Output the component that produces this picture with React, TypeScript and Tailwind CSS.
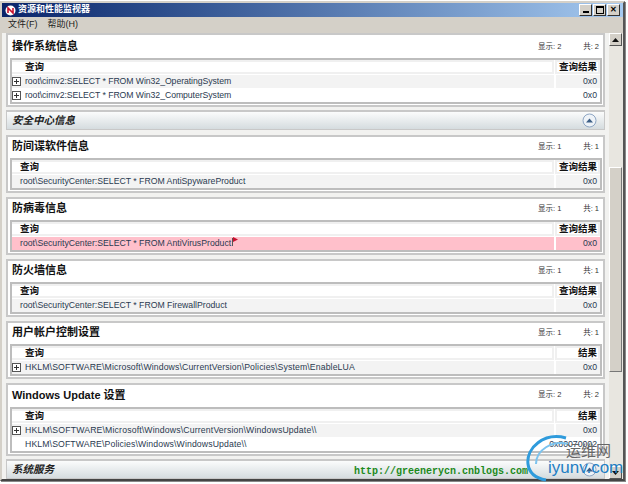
const FONT = '"Liberation Sans", "Noto Sans CJK SC", sans-serif';

interface Row {
  text: string;
  result: string;
  expand?: boolean;
  alert?: boolean;
  textClass?: string;
}

interface PanelProps {
  title: string;
  shown: number;
  total: number;
  rows: Row[];
  resultLabel?: string;
  indent?: boolean;
  titleClass?: string;
  gapClass?: string;
}

const Plus = () => (
  <svg width="9" height="9" viewBox="0 0 9 9" className="shrink-0">
    <rect x="0.5" y="0.5" width="8" height="8" fill="#fff" stroke="#555" />
    <path d="M2 4.5h5M4.5 2v5" stroke="#333" />
  </svg>
);

const Panel = ({ title, shown, total, rows, resultLabel = '查询结果', indent = false, titleClass = 'h-[21px] pb-[2px]', gapClass = 'mb-[4px]' }: PanelProps) => {
  return (
    <div className={`${gapClass} mr-[4px] shrink-0 border-2 border-[#c8c8c8] bg-white pb-[1px] pl-[2px] pr-[1px]`}>
      <div className={`flex items-center pl-[2px] ${titleClass}`}>
        <span className="text-[11px] font-bold text-[#111]">{title}</span>
        <div className="ml-auto mr-[3px] flex w-[61px] text-[7.5px] text-[#333]">
          <span>显示: {shown}</span>
          <span className="ml-auto">共: {total}</span>
        </div>
      </div>
      <div className="border-2 border-[#bdbdbd]">
        <div className="flex h-[14px] text-[9.5px] font-bold text-[#111]">
          <div className={`flex flex-1 items-center border-2 border-l-0 border-[#f0f0f0] ${indent ? 'pl-[13px]' : 'pl-[8px]'}`}>查询</div>
          <div className="ml-[1px] flex w-[45px] items-center justify-end border-2 border-[#f0f0f0] pr-[1px]">{resultLabel}</div>
        </div>
        <div className="mt-[1px] flex flex-col">
          {rows.map((row, i) => (
            <div
              key={row.text}
              className={`flex h-[13px] items-center text-[8.7px] text-[#2a3a50] ${row.alert ? 'bg-[#ffc0cb]' : i % 2 === 0 ? 'bg-[#f3f3f3]' : 'bg-white'} ${i > 0 ? 'mt-[1px]' : ''}`}
            >
              <div className={`flex flex-1 items-center overflow-hidden whitespace-nowrap ${indent ? '' : 'pl-[8px]'}`}>
                {indent && <span className="mr-[4px] flex w-[9px] shrink-0">{row.expand && <Plus />}</span>}
                <span className={row.textClass}>{row.text}</span>
                {row.alert && (
                  <svg width="7" height="9" viewBox="0 0 7 9" className="-mt-[4px] ml-[1px] shrink-0">
                    <path d="M0.5 1v8" stroke="#555" />
                    <path d="M1 0l5 2.5L1 5z" fill="#c8102e" />
                  </svg>
                )}
              </div>
              <div className="flex h-full w-[46px] items-center justify-end border-l-2 border-white pr-[3px]">{row.result}</div>
            </div>
          ))}
        </div>
      </div>
    </div>
  );
};

const SectionBar = ({ title }: { title: string }) => (
  <div className="mb-[5px] mr-[4px] flex h-[20px] shrink-0 items-center border border-t-2 border-[#c8c8c8] bg-gradient-to-b from-[#fbfcfc] to-[#d5dcdf] pl-[5px] pr-[7px]">
    <span className="text-[10.5px] font-bold italic text-[#222]">{title}</span>
    <svg width="15" height="15" viewBox="0 0 15 15" className="ml-auto">
      <circle cx="7.5" cy="7.5" r="6.5" fill="#eef3f8" stroke="#8ea6c4" />
      <path d="M4 9.5L7.5 5.5L11 9.5z" fill="#3d5f86" />
    </svg>
  </div>
);

const CapButton = ({ children }: { children: React.ReactNode }) => (
  <div className="flex h-[12px] w-[13px] items-center justify-center border border-t-white border-l-white border-r-[#333] border-b-[#333] bg-[#d4d0c8] text-[8px] font-bold text-black">
    {children}
  </div>
);

const ScrollArrow = ({ up }: { up?: boolean }) => (
  <div className="flex h-[13px] w-[13px] shrink-0 items-center justify-center border border-t-white border-l-white border-r-[#555] border-b-[#555] bg-[#d4d0c8]">
    <svg width="7" height="4" viewBox="0 0 7 4">
      <path d={up ? 'M0 4L3.5 0L7 4z' : 'M0 0L3.5 4L7 0z'} fill="#111" />
    </svg>
  </div>
);

const App = () => {
  return (
    <div className="relative h-[484px] w-[628px] overflow-hidden bg-white pt-[1px]" style={{ fontFamily: FONT }}>
      <div className="flex h-[480px] w-[625px] flex-col border-2 border-[#d4d0c8] border-r-[#555] border-b-[#444] shadow-[1px_1px_0_#888]">
        {/* title bar */}
        <div className="flex h-[14px] shrink-0 items-center bg-gradient-to-r from-[#0a246a] to-[#a6caf0] pl-[3px] pr-[3px]">
          <svg width="11" height="11" viewBox="0 0 11 11">
            <circle cx="5.5" cy="5.5" r="5" fill="#fff" />
            <path d="M3 8V3l5 5V3" stroke="#c8102e" strokeWidth="1.6" fill="none" />
          </svg>
          <span className="ml-[2px] text-[9px] font-bold text-white">资源和性能监视器</span>
          <div className="ml-auto flex gap-[1px]">
            <CapButton><span className="mt-[4px] block h-[2px] w-[6px] bg-black" /></CapButton>
            <CapButton><span className="block h-[8px] w-[8px] border border-t-2 border-black" /></CapButton>
            <CapButton>✕</CapButton>
          </div>
        </div>
        {/* menu */}
        <div className="flex h-[16px] shrink-0 items-center gap-[10px] bg-[#d4d0c8] pl-[6px] text-[9px] text-[#222]">
          <span>文件(F)</span>
          <span>帮助(H)</span>
        </div>
        {/* body */}
        <div className="flex min-h-0 flex-1 bg-[#f2f2f0] pl-[4px]">
          <div className="flex min-w-0 flex-1 flex-col overflow-hidden">
            <Panel
              title="操作系统信息"
              shown={2}
              total={2}
              indent
              titleClass="h-[23px]"
              gapClass="mb-[3px]"
              rows={[
                { text: 'root\\cimv2:SELECT * FROM Win32_OperatingSystem', result: '0x0', expand: true, textClass: 'tracking-[-0.06px]' },
                { text: 'root\\cimv2:SELECT * FROM Win32_ComputerSystem', result: '0x0', expand: true, textClass: 'tracking-[-0.06px]' },
              ]}
            />
            <SectionBar title="安全中心信息" />
            <Panel
              title="防间谍软件信息"
              shown={1}
              total={1}
              rows={[{ text: 'root\\SecurityCenter:SELECT * FROM AntiSpywareProduct', result: '0x0' }]}
            />
            <Panel
              title="防病毒信息"
              shown={1}
              total={1}
              rows={[{ text: 'root\\SecurityCenter:SELECT * FROM AntiVirusProduct', result: '0x0', alert: true }]}
            />
            <Panel
              title="防火墙信息"
              shown={1}
              total={1}
              rows={[{ text: 'root\\SecurityCenter:SELECT * FROM FirewallProduct', result: '0x0' }]}
            />
            <Panel
              title="用户帐户控制设置"
              shown={1}
              total={1}
              indent
              resultLabel="结果"
              rows={[{ text: 'HKLM\\SOFTWARE\\Microsoft\\Windows\\CurrentVersion\\Policies\\System\\EnableLUA', result: '0x0', expand: true, textClass: 'tracking-[0.12px]' }]}
            />
            <Panel
              title="Windows Update 设置"
              shown={2}
              total={2}
              indent
              resultLabel="结果"
              titleClass="h-[22px] pb-[2px]"
              gapClass="mb-[3px]"
              rows={[
                { text: 'HKLM\\SOFTWARE\\Microsoft\\Windows\\CurrentVersion\\WindowsUpdate\\\\', result: '0x0', expand: true, textClass: 'tracking-[0.16px]' },
                { text: 'HKLM\\SOFTWARE\\Policies\\Windows\\WindowsUpdate\\\\', result: '0x80070002', textClass: 'tracking-[0.12px]' },
              ]}
            />
            <SectionBar title="系统服务" />
          </div>
          {/* scrollbar */}
          <div className="flex w-[14px] shrink-0 flex-col bg-[#e8e6e0]">
            <ScrollArrow up />
            <div className="mt-[121px] h-[205px] w-[13px] border border-t-white border-l-white border-r-[#777] border-b-[#777] bg-[#d4d0c8]" />
            <div className="flex-1" />
            <ScrollArrow />
          </div>
        </div>
      </div>
      {/* watermark over the screenshot */}
      <span className="absolute left-[354px] top-[464px] font-['Liberation_Mono'] text-[10px] font-bold text-[#1c8a1c]">http://greenerycn.cnblogs.com</span>
      <svg width="60" height="50" viewBox="0 0 60 50" className="absolute left-[524px] top-[434px]">
        <path d="M42 4C20 -2 2 14 4 30C5 38 10 44 22 46" stroke="#2f9bdc" strokeWidth="3" fill="none" />
        <path d="M44 10C28 6 12 16 12 30" stroke="#7cc3ee" strokeWidth="2" fill="none" />
      </svg>
      <span className="absolute left-[566px] top-[442px] text-[15px] leading-[18px] text-[#666]">运维网</span>
      <span className="absolute left-[548px] top-[459px] text-[17px] font-medium leading-[18px] text-[#1f7fc4]">iyunv.com</span>
    </div>
  );
};

export default App;
